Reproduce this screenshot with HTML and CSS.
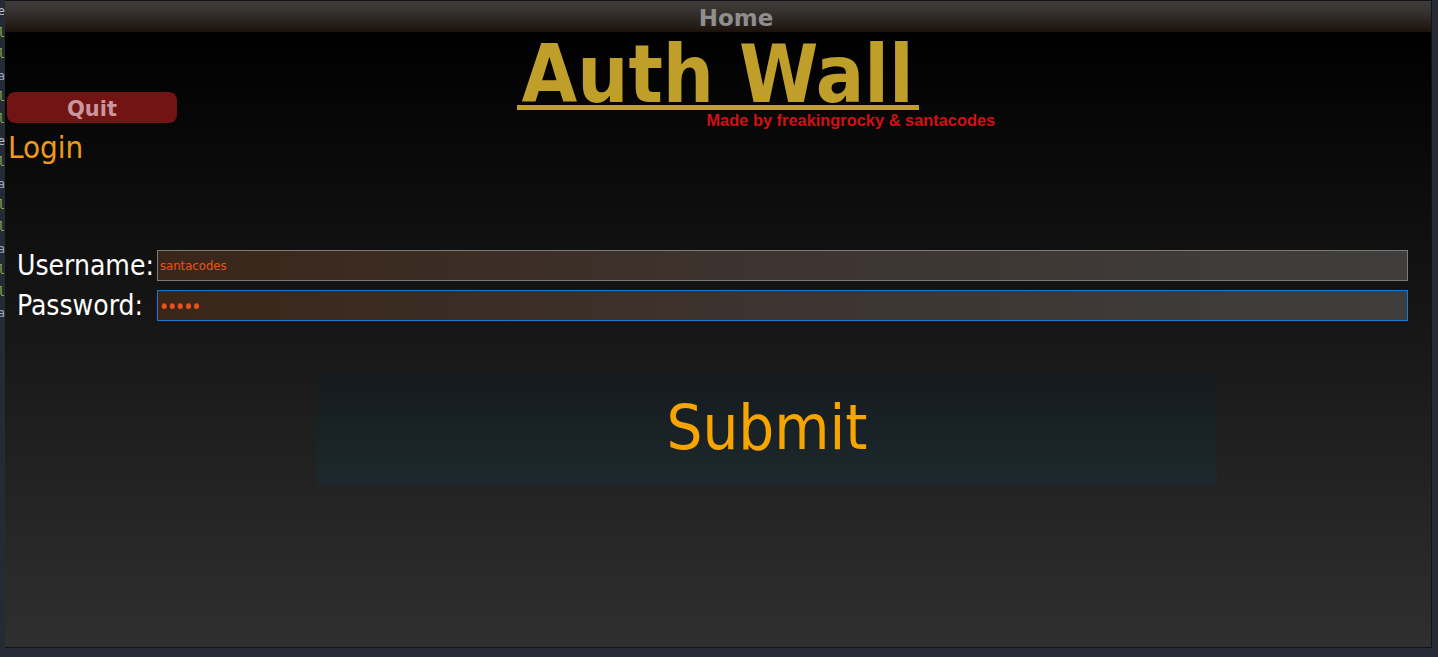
FILE: index.html
```html
<!DOCTYPE html>
<html lang="en">
<head>
<meta charset="utf-8">
<title>Auth Wall</title>
<link rel="stylesheet" href="styles.css">
</head>
<body>
<div class="desktop">
  <div class="gutter">
    <div class="gl"><span class="w">ne</span></div>
    <div class="gl"><span class="g">ml</span></div>
    <div class="gl"><span class="w">n</span><span class="g">l</span></div>
    <div class="gl"><span class="b">a</span></div>
    <div class="gl"><span class="w">n</span><span class="g">l</span></div>
    <div class="gl"><span class="w">n</span><span class="g">l</span></div>
    <div class="gl"><span class="w">e</span></div>
    <div class="gl"><span class="w">n</span><span class="g">l</span></div>
    <div class="gl"><span class="b">a</span></div>
    <div class="gl"><span class="g">ml</span></div>
    <div class="gl"><span class="w">n</span><span class="g">l</span></div>
    <div class="gl"><span class="b">a</span></div>
    <div class="gl"><span class="w">n</span><span class="g">l</span></div>
    <div class="gl"><span class="w">n</span><span class="g">l</span></div>
    <div class="gl"><span class="b">a</span></div>
  </div>
  <div class="window">
    <div class="titlebar">Home</div>
    <div class="main">
      <div class="masthead">
        <button class="quit" type="button">Quit</button>
        <h1 class="title">Auth Wall</h1>
        <div class="credits">Made by freakingrocky &amp; santacodes</div>
      </div>
      <h2 class="login">Login</h2>
      <form class="form">
        <label class="label" for="user">Username:</label>
        <input class="field" id="user" type="text" value="santacodes">
        <label class="label" for="pass">Password:</label>
        <input class="field field-focus field-pass" id="pass" type="password" value="santa" autofocus>
      </form>
      <button class="submit" type="button">Submit</button>
    </div>
  </div>
</div>
</body>
</html>
```
FILE: styles.css
```css
html, body {
  margin: 0;
  padding: 0;
}
body {
  background: #262a35;
  width: 1438px;
  height: 657px;
  overflow: hidden;
}
.desktop {
  display: flex;
  height: 657px;
  box-sizing: border-box;
  padding: 0 6px 9px 0;
}
.gutter {
  width: 5px;
  overflow: hidden;
  direction: rtl;
  padding-top: 1px;
  font-family: "DejaVu Sans Mono", monospace;
  font-size: 12px;
  line-height: 21.6px;
  white-space: nowrap;
}
.gl { height: 21.6px; }
.gutter .w { color: #b9bcc4; }
.gutter .g { color: #86b447; }
.gutter .b { color: #9aa8c2; }
.window {
  flex: 1;
  display: flex;
  flex-direction: column;
  border: 1px solid #121319;
  border-left: none;
}
.titlebar {
  height: 31px;
  box-sizing: border-box;
  padding: 3px 0 0 36px;
  line-height: 28px;
  text-align: center;
  font-family: "DejaVu Sans", Verdana, sans-serif;
  font-weight: bold;
  font-size: 23px;
  color: #8e8e8e;
  background: linear-gradient(#3e3d3b, #36322f 35%, #1c120b);
}
.main {
  flex: 1;
  display: flex;
  flex-direction: column;
  align-items: flex-start;
  background: linear-gradient(#000000, #2f2f2f);
}
.masthead {
  align-self: stretch;
  display: grid;
  grid-template-columns: 1fr auto 1fr;
  grid-template-rows: auto auto;
  margin-top: 3px;
}
.quit {
  grid-column: 1;
  grid-row: 1 / 3;
  align-self: start;
  justify-self: start;
  margin: 57px 0 0 2px;
  width: 170px;
  height: 31px;
  box-sizing: border-box;
  padding: 3px 0 0;
  border: none;
  border-radius: 8px;
  background: #731414;
  color: #c8969b;
  font-family: "DejaVu Sans", Verdana, sans-serif;
  font-weight: bold;
  font-size: 21px;
  line-height: 28px;
}
.title {
  grid-column: 2;
  grid-row: 1;
  margin: 0;
  height: 70px;
  padding: 0 5px 0 4px;
  border-bottom: 5px solid #bf9f2a;
  font-family: "DejaVu Sans Condensed", "DejaVu Sans", sans-serif;
  font-weight: bold;
  font-size: 80px;
  line-height: 80px;
  color: #bf9f2a;
}
.credits {
  grid-column: 2 / 4;
  grid-row: 2;
  margin-top: 2px;
  padding-left: 189px;
  font-family: "Liberation Sans", Arial, sans-serif;
  font-weight: bold;
  font-size: 16.4px;
  line-height: 17px;
  color: #cf1212;
}
.login {
  margin: 0 0 0 3px;
  font-family: "DejaVu Sans Condensed", "DejaVu Sans", sans-serif;
  font-weight: normal;
  font-size: 31px;
  line-height: 36px;
  color: #f09a18;
}
.form {
  align-self: stretch;
  display: grid;
  grid-template-columns: auto 1fr;
  column-gap: 3px;
  row-gap: 9px;
  align-items: center;
  margin: 85px 23px 0 12px;
}
.label {
  font-family: "DejaVu Sans Condensed", "DejaVu Sans", sans-serif;
  font-size: 28px;
  line-height: 31px;
  color: #ffffff;
}
.field {
  height: 31px;
  box-sizing: border-box;
  margin: 0;
  padding: 0 2px;
  border: 1px solid #7c7b7a;
  outline: none;
  background: linear-gradient(to right, #3a2619, #3d3430 50%, #3f3e3c);
  color: #ea5418;
  caret-color: #e8e8e8;
  font-family: "DejaVu Sans Condensed", "DejaVu Sans", sans-serif;
  font-size: 13px;
}
.field-pass {
  font-size: 19px;
  letter-spacing: -2px;
  padding-left: 1px;
}
.field-focus,
.field:focus {
  border-color: #1877d8;
  outline: none;
}
.submit {
  margin: 49px 0 0 312px;
  width: 900px;
  height: 115px;
  padding: 0;
  border: none;
  background: linear-gradient(#141a1d, #1d292e);
  color: #f6a500;
  font-family: "DejaVu Sans Condensed", "DejaVu Sans", sans-serif;
  font-size: 63px;
  line-height: 115px;
}
```
